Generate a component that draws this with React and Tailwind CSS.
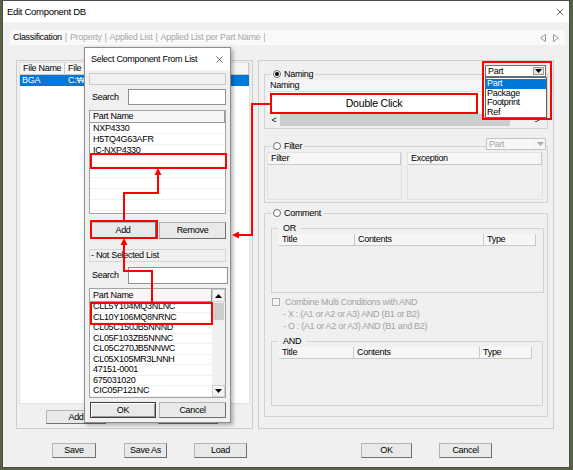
import React from "react";
import { X } from "lucide-react";

const btn =
  "flex items-center justify-center bg-[#e9e9e9] border border-[#b4b4b4] border-r-[#6f6f6f] border-b-[#6f6f6f]";

const Radio = ({ on }) => (
  <span className="w-[8px] h-[8px] rounded-full border border-[#6d6d6d] bg-white flex items-center justify-center">
    {on && <span className="w-[4px] h-[4px] rounded-full bg-black" />}
  </span>
);

const Group = ({ className = "", legend, right, children }) => (
  <div className={"border border-[#d3d3d3] shrink-0 " + className}>
    <div className="-mt-[7px] h-[12px] flex items-start pl-[6px] pr-[1px]">
      <div className="h-[12px] flex items-center gap-[3px] px-[2px] bg-[#f0f0f0]">{legend}</div>
      {right}
    </div>
    {children}
  </div>
);

const Arrow = ({ down }) => (
  <svg width="7" height="4" viewBox="0 0 7 4">
    <polygon points={down ? "0,0 7,0 3.5,4" : "0,4 7,4 3.5,0"} fill="#000" />
  </svg>
);

const Combo = ({ disabled }) => (
  <div
    className={
      disabled
        ? "w-[60px] h-[12px] bg-[#f7f7f7] border border-[#c4c4c4] flex text-[#a6a6a6]"
        : "w-[61px] h-[12px] bg-white border border-[#6e6e6e] flex"
    }
  >
    <span className="flex-1 pl-[2px] flex items-center">Part</span>
    <span
      className={
        disabled
          ? "w-[11px] flex items-center justify-center border-l border-[#dcdcdc] opacity-30"
          : "w-[11px] m-[1px] flex items-center justify-center bg-[#e6e6e6] border border-[#9a9a9a]"
      }
    >
      <Arrow down />
    </span>
  </div>
);

const Header = ({ cols, className = "" }) => (
  <div className={"h-[12px] flex shrink-0 " + className}>
    {cols.map(([label, w], i) => (
      <div
        key={i}
        className={
          w
            ? "h-full flex items-center pl-[3px] bg-[#f6f6f6] border-r border-b border-[#c9c9c9] overflow-hidden"
            : "h-full flex-1 flex items-center pl-[3px] bg-[#f6f6f6] border-r border-b border-[#c9c9c9] overflow-hidden"
        }
        style={w ? { width: w } : undefined}
      >
        {label}
      </div>
    ))}
  </div>
);

const Tabs = () => (
  <div className="w-[555px] h-[15px] bg-[#f9f9f9] flex items-center pl-[3px] gap-[3px] text-[#a8a8a8] shrink-0">
    <span className="text-black">Classification</span>
    <span>|</span>
    <span>Property</span>
    <span>|</span>
    <span>Applied List</span>
    <span>|</span>
    <span>Applied List per Part Name</span>
    <span>|</span>
    <span className="ml-auto flex gap-[7px] pr-[6px]">
      <svg width="6" height="8" viewBox="0 0 6 8">
        <polygon points="5.5,0.5 5.5,7.5 0.5,4" fill="none" stroke="#9a9a9a" />
      </svg>
      <svg width="6" height="8" viewBox="0 0 6 8">
        <polygon points="0.5,0.5 0.5,7.5 5.5,4" fill="none" stroke="#9a9a9a" />
      </svg>
    </span>
  </div>
);

const LeftPanel = () => (
  <div className="w-[237px] h-[369px] border border-[#cdcdcd] flex flex-col shrink-0">
    <div className="ml-[2px] mt-[1px] w-[231px] h-[342px] bg-white border border-[#e1e1e1] flex flex-col">
      <Header cols={[["File Name", 45], ["File Path", 0]]} />
      <div className="h-[11px] bg-[#0078d7] text-white flex items-center">
        <span className="w-[45px] pl-[2px]">BGA</span>
        <span className="pl-[3px]">C:₩Users₩Public₩Library₩BGA.db</span>
      </div>
    </div>
    <div className="mt-[6px] h-[14px] flex">
      <div className={btn + " ml-[29px] w-[60px]"}>Add</div>
      <div className={btn + " ml-[52px] w-[60px]"}>Remove</div>
    </div>
  </div>
);

const RightPanel = () => (
  <div className="w-[296px] h-[369px] border border-[#cdcdcd] flex flex-col pl-[5px] shrink-0">
    <Group
      className="mt-[13px] w-[284px]"
      legend={
        <>
          <Radio on />
          <span>Naming</span>
        </>
      }
      right={
        <div className="ml-auto -mt-[3px]">
          <Combo />
        </div>
      }
    >
      <div className="mx-[3px] flex flex-col">
        <div className="h-[12px] bg-[#f6f6f6] border-b border-[#dedede] flex items-center pl-[2px]">Naming</div>
        <div className="h-[22px] bg-white" />
        <div className="h-[12px] flex bg-[#f0f0f0]">
          <span className="w-[12px] flex items-center justify-center">&lt;</span>
          <span className="w-[230px] bg-[#cdcdcd]" />
          <span className="flex-1" />
          <span className="w-[14px] flex items-center justify-center">&gt;</span>
        </div>
      </div>
      <div className="h-[2px]" />
    </Group>

    <Group
      className="mt-[17px] w-[284px]"
      legend={
        <>
          <Radio />
          <span>Filter</span>
        </>
      }
      right={
        <div className="ml-auto -mt-[2px]">
          <Combo disabled />
        </div>
      }
    >
      <div className="pl-[2px] flex gap-[5px] h-[48px]">
        <div className="w-[135px] border border-[#e2e2e2] bg-[#f0f0f0]">
          <Header cols={[["Filter", 0]]} />
        </div>
        <div className="w-[136px] border border-[#e2e2e2] bg-[#f0f0f0]">
          <Header cols={[["Exception", 0]]} />
        </div>
      </div>
      <div className="h-[2px]" />
    </Group>

    <Group
      className="mt-[10px] w-[284px]"
      legend={
        <>
          <Radio />
          <span>Comment</span>
        </>
      }
    >
      <Group className="mt-[9px] ml-[6px] w-[273px]" legend={<span className="px-[3px]">OR</span>}>
        <div className="ml-[7px] w-[257px] flex flex-col">
          <Header cols={[["Title", 76], ["Contents", 129], ["Type", 0]]} />
          <div className="h-[44px] bg-[#f0f0f0]" />
        </div>
        <div className="h-[2px]" />
      </Group>
      <div className="mt-[3px] h-[12px] flex items-center pl-[7px] gap-[5px] text-[#a3a3a3]">
        <span className="w-[8px] h-[8px] border border-[#b1b1b1] bg-[#f5f5f5]" />
        <span>Combine Multi Conditions with AND</span>
      </div>
      <div className="h-[12px] flex items-center pl-[18px] text-[#a3a3a3]">- X : (A1 or A2 or A3) AND (B1 or B2)</div>
      <div className="h-[12px] flex items-center pl-[18px] text-[#a3a3a3]">- O : (A1 or A2 or A3) AND (B1 and B2)</div>
      <Group className="mt-[9px] ml-[6px] w-[272px]" legend={<span className="px-[3px]">AND</span>}>
        <div className="ml-[7px] w-[253px] flex flex-col">
          <Header cols={[["Title", 75], ["Contents", 126], ["Type", 0]]} />
          <div className="h-[44px] bg-[#f0f0f0]" />
        </div>
        <div className="h-[2px]" />
      </Group>
      <div className="h-[10px]" />
    </Group>
  </div>
);

const parts = ["NXP4330", "H5TQ4G63AFR", "IC-NXP4330", "", "", "", "", ""];
const others = [
  "CLL5Y104MQ3NLNC",
  "CL10Y106MQ8NRNC",
  "CL05C150JB5NNND",
  "CL05F103ZB5NNNC",
  "CL05C270JB5NNWC",
  "CL05X105MR3LNNH",
  "47151-0001",
  "675031020",
  "CIC05P121NC",
];

const Dialog = () => (
  <div className="absolute left-[84px] top-[47px] w-[147px] h-[376px] bg-[#f0f0f0] border border-[#8c8c8c] shadow-[2px_2px_4px_rgba(0,0,0,0.3)] flex flex-col">
    <div className="h-[22px] bg-white flex items-center justify-between pl-[6px] pr-[5px] shrink-0">
      <span>Select Component From List</span>
      <X size={11} strokeWidth={1.3} />
    </div>
    <div className="px-[4px] flex flex-col">
      <div className="mt-[3px] h-[12px] bg-[#f0f0f0] border border-[#cacaca]" />
      <div className="mt-[4px] h-[16px] flex items-center">
        <span className="w-[39px] pl-[3px]">Search</span>
        <span className="flex-1 h-full bg-white border border-[#8f8f8f]" />
      </div>
      <div className="mt-[5px] h-[104px] bg-white border border-[#a3a3a3] flex flex-col">
        <div className="h-[12px] flex items-center pl-[3px] bg-[#f6f6f6] border-r border-b border-[#9a9a9a] shrink-0">
          Part Name
        </div>
        {parts.map((p, i) => (
          <div key={i} className="h-[11px] flex items-center pl-[3px] border-b border-[#f1f1f1] shrink-0">
            {p}
          </div>
        ))}
      </div>
      <div className="mt-[8px] h-[17px] flex">
        <div className={btn + " ml-[1px] w-[66px]"}>Add</div>
        <div className={btn + " ml-[3px] w-[67px]"}>Remove</div>
      </div>
      <div className="mt-[10px] h-[13px] bg-[#f0f0f0] border border-[#d6d6d6] flex items-center pl-[1px]">
        - Not Selected List
      </div>
      <div className="mt-[5px] h-[17px] flex items-center">
        <span className="w-[39px] pl-[3px]">Search</span>
        <span className="flex-1 -mr-[2px] h-full bg-white border border-[#8f8f8f]" />
      </div>
      <div className="mt-[4px] h-[110px] bg-white border border-[#a3a3a3] flex">
        <div className="flex-1 flex flex-col">
          <div className="h-[13px] flex items-center pl-[3px] bg-[#f6f6f6] border-r border-b border-[#9a9a9a] shrink-0">
            Part Name
          </div>
          {others.map((p) => (
            <div key={p} className="h-[10.5px] flex items-center pl-[3px] border-b border-[#f1f1f1] shrink-0">
              {p}
            </div>
          ))}
        </div>
        <div className="w-[13px] bg-[#f0f0f0] flex flex-col items-center">
          <div className="w-full h-[13px] flex items-center justify-center bg-[#f4f4f4] border border-[#d0d0d0]">
            <Arrow />
          </div>
          <div className="mt-[1px] w-[11px] h-[17px] bg-[#cdcdcd]" />
          <div className="flex-1" />
          <div className="w-full h-[12px] flex items-center justify-center bg-[#f4f4f4] border border-[#d0d0d0]">
            <Arrow down />
          </div>
        </div>
      </div>
      <div className="mt-[4px] h-[16px] flex">
        <div className="ml-[1px] w-[66px] flex items-center justify-center bg-[#e9e9e9] border border-[#3f3f3f] shadow-[inset_1px_1px_0_#fff,inset_-1px_-1px_0_#9a9a9a]">
          OK
        </div>
        <div className={btn + " ml-[3px] w-[67px]"}>Cancel</div>
      </div>
    </div>
  </div>
);

const Annotations = () => (
  <>
    <div className="absolute left-[270px] top-[93px] w-[208px] h-[21px] bg-white border-2 border-[#ff0000] flex items-center justify-center text-[10.5px] tracking-[-0.2px]">
      Double Click
    </div>
    <div className="absolute left-[485px] top-[77px] w-[62px] h-[41px] bg-white border border-[#646464] flex flex-col pt-[1px]">
      <div className="h-[9.5px] bg-[#0078d7] text-white flex items-center pl-[1px]">Part</div>
      <div className="h-[9.5px] flex items-center pl-[1px]">Package</div>
      <div className="h-[9.5px] flex items-center pl-[1px]">Footprint</div>
      <div className="h-[9.5px] flex items-center pl-[1px]">Ref</div>
    </div>
    <svg className="absolute left-0 top-0 pointer-events-none" width="573" height="470">
      <g fill="none" stroke="#ff0000" strokeWidth="2">
        <rect x="91" y="154" width="135" height="14" />
        <rect x="91" y="221" width="66" height="17" />
        <rect x="91" y="303" width="121" height="21" />
        <rect x="483" y="62" width="68" height="57" />
        <polyline points="270,104 252,104 252,235 238,235" />
        <polyline points="124,220 124,193 158,193 158,175" />
        <polyline points="152,302 152,271 124,271 124,245" />
      </g>
      <g fill="#ff0000">
        <polygon points="232,235 239,231.5 239,238.5" />
        <polygon points="158,168 154.5,175 161.5,175" />
        <polygon points="124,238 120.5,245 127.5,245" />
      </g>
    </svg>
  </>
);

export default function App() {
  return (
    <div className="relative w-[573px] h-[470px] overflow-hidden bg-[#55633f] font-['Liberation_Sans',Arial,sans-serif] text-[9px] tracking-[-0.3px] leading-none text-black whitespace-nowrap">
      <div className="ml-[2px] w-[568px] h-[468px] border border-[#4d4d4d] bg-[#f0f0f0] flex flex-col">
        <div className="h-[21px] bg-white flex items-center justify-between pl-[4px] pr-[3px] shrink-0">
          <span className="text-[9.5px]">Edit Component DB</span>
          <X size={12} strokeWidth={1.2} />
        </div>
        <div className="flex flex-col px-[7px] pt-[8px]">
          <Tabs />
          <div className="mt-[15px] ml-[6px] flex gap-[5px]">
            <LeftPanel />
            <RightPanel />
          </div>
          <div className="mt-[14px] h-[15px] flex">
            <div className={btn + " ml-[42px] w-[44px]"}>Save</div>
            <div className={btn + " ml-[28px] w-[43px]"}>Save As</div>
            <div className={btn + " ml-[27px] w-[53px]"}>Load</div>
            <div className={btn + " ml-[114px] w-[51px]"}>OK</div>
            <div className={btn + " ml-[27px] w-[53px]"}>Cancel</div>
          </div>
        </div>
      </div>
      <Dialog />
      <Annotations />
    </div>
  );
}
